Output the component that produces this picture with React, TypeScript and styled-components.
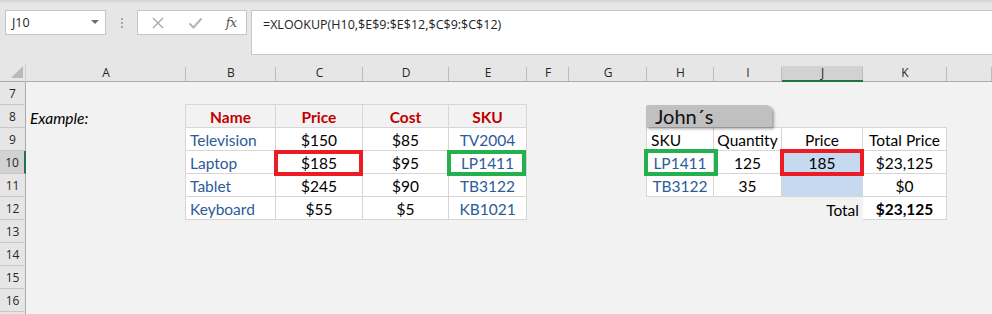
import styled, { createGlobalStyle, css } from "styled-components";

const GlobalStyle = createGlobalStyle`
  html, body {
    margin: 0;
    padding: 0;
    background: #f2f2f2;
    overflow: hidden;
  }
`;

const UI_FONT = `"Open Sans", "Noto Sans", sans-serif`;
const CELL_FONT = `Lato, "Liberation Sans", sans-serif`;
const GRID_LINE = "#d6d6d6";

// column widths in px: row header, A..K, rest
const COLUMNS = ["A", "B", "C", "D", "E", "F", "G", "H", "I", "J", "K"];
const WIDTHS = [26, 160, 90, 87, 86, 78, 42, 78, 67, 68, 81, 84];
const ROWS = [7, 8, 9, 10, 11, 12, 13, 14, 15, 16];

const col = (letter: string) => COLUMNS.indexOf(letter) + 2;
const row = (n: number) => n - 5;

type Align = "left" | "center" | "right";

interface CellSpec {
  ref: string;
  text?: string;
  align?: Align;
  color?: string;
  bold?: boolean;
  italic?: boolean;
  bg?: string;
  border?: boolean;
  top?: boolean;
  left?: boolean;
  box?: { color: string; t: number; r: number; b: number; l: number };
}

const RED = "#c00000";
const BLUE = "#2e5a98";
const RED_BOX = "#ed1c24";
const GREEN_BOX = "#22b14c";

const tbl = { border: true };

const CELLS: CellSpec[] = [
  { ref: "A8", text: "Example:", align: "left", italic: true },

  { ref: "B8", text: "Name", bold: true, color: RED, bg: "#f2f2f2", ...tbl, top: true, left: true },
  { ref: "C8", text: "Price", bold: true, color: RED, bg: "#f2f2f2", ...tbl, top: true },
  { ref: "D8", text: "Cost", bold: true, color: RED, bg: "#f2f2f2", ...tbl, top: true },
  { ref: "E8", text: "SKU", bold: true, color: RED, bg: "#f2f2f2", ...tbl, top: true },

  { ref: "B9", text: "Television", align: "left", color: BLUE, bg: "#fff", ...tbl, left: true },
  { ref: "C9", text: "$150", bg: "#fff", ...tbl },
  { ref: "D9", text: "$85", bg: "#fff", ...tbl },
  { ref: "E9", text: "TV2004", color: BLUE, bg: "#fff", ...tbl },

  { ref: "B10", text: "Laptop", align: "left", color: BLUE, bg: "#fff", ...tbl, left: true },
  { ref: "C10", text: "$185", bg: "#fff", ...tbl, box: { color: RED_BOX, t: -1, r: -1, b: -3, l: -2 } },
  { ref: "D10", text: "$95", bg: "#fff", ...tbl },
  { ref: "E10", text: "LP1411", color: BLUE, bg: "#fff", ...tbl, box: { color: GREEN_BOX, t: -1, r: 0, b: -3, l: -2 } },

  { ref: "B11", text: "Tablet", align: "left", color: BLUE, bg: "#fff", ...tbl, left: true },
  { ref: "C11", text: "$245", bg: "#fff", ...tbl },
  { ref: "D11", text: "$90", bg: "#fff", ...tbl },
  { ref: "E11", text: "TB3122", color: BLUE, bg: "#fff", ...tbl },

  { ref: "B12", text: "Keyboard", align: "left", color: BLUE, bg: "#fff", ...tbl, left: true },
  { ref: "C12", text: "$55", bg: "#fff", ...tbl },
  { ref: "D12", text: "$5", bg: "#fff", ...tbl },
  { ref: "E12", text: "KB1021", color: BLUE, bg: "#fff", ...tbl },

  { ref: "H9", text: "SKU", align: "left", bg: "#fff", ...tbl, top: true, left: true },
  { ref: "I9", text: "Quantity", bg: "#fff", ...tbl, top: true },
  { ref: "J9", text: "Price", bg: "#fff", ...tbl, top: true },
  { ref: "K9", text: "Total Price", bg: "#fff", ...tbl, top: true },

  { ref: "H10", text: "LP1411", color: BLUE, bg: "#fff", ...tbl, left: true, box: { color: GREEN_BOX, t: -2, r: -5, b: -3, l: -3 } },
  { ref: "I10", text: "125", bg: "#fff", ...tbl },
  { ref: "J10", text: "185", bg: "#c5d9f1", ...tbl, box: { color: RED_BOX, t: -2, r: -2, b: -3, l: -2 } },
  { ref: "K10", text: "$23,125", bg: "#fff", ...tbl },

  { ref: "H11", text: "TB3122", color: BLUE, bg: "#fff", ...tbl, left: true },
  { ref: "I11", text: "35", bg: "#fff", ...tbl },
  { ref: "J11", bg: "#c5d9f1", ...tbl },
  { ref: "K11", text: "$0", bg: "#fff", ...tbl },

  { ref: "J12", text: "Total", align: "right" },
  { ref: "K12", text: "$23,125", bold: true, bg: "#fff", ...tbl },
];

const parseRef = (ref: string) => {
  const m = ref.match(/^([A-Z])(\d+)$/)!;
  return { c: col(m[1]), r: row(Number(m[2])) };
};

const XIcon = () => (
  <svg width="14" height="14" viewBox="0 0 14 14">
    <path d="M2 2 L12 12 M12 2 L2 12" stroke="#a8a8a8" strokeWidth="1.4" fill="none" />
  </svg>
);

const CheckIcon = () => (
  <svg width="15" height="14" viewBox="0 0 15 14">
    <path d="M1.5 7.5 L5.5 11.5 L13.5 2.5" stroke="#b4b4b4" strokeWidth="2" fill="none" />
  </svg>
);

const CornerMark = () => (
  <svg width="12" height="12" viewBox="0 0 12 12">
    <polygon points="12,0 12,12 0,12" fill="#b9b9b9" />
  </svg>
);

const App = () => {
  return (
    <>
      <GlobalStyle />
      <Window>
        <FormulaArea>
          <NameBox>
            <span>J10</span>
            <DropArrow />
          </NameBox>
          <Grip>
            <i />
            <i />
            <i />
          </Grip>
          <ButtonBox>
            <XIcon />
            <CheckIcon />
            <Fx>fx</Fx>
          </ButtonBox>
          <FormulaInput>=XLOOKUP(H10,$E$9:$E$12,$C$9:$C$12)</FormulaInput>
        </FormulaArea>

        <Sheet>
          <Corner>
            <CornerMark />
          </Corner>
          {COLUMNS.map((letter) => (
            <ColHeader key={letter} $c={col(letter)} $active={letter === "J"}>
              {letter}
            </ColHeader>
          ))}
          <ColHeader $c={COLUMNS.length + 2} />
          {ROWS.map((n) => (
            <RowHeader key={n} $r={row(n)} $active={n === 10}>
              {n}
            </RowHeader>
          ))}
          <RowHeader $r={row(17)} />

          {CELLS.map((cell) => {
            const { r, c } = parseRef(cell.ref);
            return (
              <Cell
                key={cell.ref}
                $r={r}
                $c={c}
                $align={cell.align ?? "center"}
                $color={cell.color}
                $bold={cell.bold}
                $italic={cell.italic}
                $bg={cell.bg}
                $border={cell.border}
                $top={cell.top}
                $left={cell.left}
              >
                {cell.text}
                {cell.box && (
                  <Highlight
                    $color={cell.box.color}
                    $t={cell.box.t}
                    $r={cell.box.r}
                    $b={cell.box.b}
                    $l={cell.box.l}
                  />
                )}
              </Cell>
            );
          })}

          <Label $r={row(8)} $c={col("H")}>
            John´s
          </Label>
        </Sheet>
      </Window>
    </>
  );
};

export default App;

const Window = styled.div`
  width: 992px;
  height: 314px;
  overflow: hidden;
  display: flex;
  flex-direction: column;
  background: #f2f2f2;
`;

const FormulaArea = styled.div`
  flex: 0 0 64px;
  height: 64px;
  box-sizing: border-box;
  padding: 10px 0 0 5px;
  display: flex;
  align-items: flex-start;
  background: linear-gradient(#d2d2d2 0, #e3e3e3 3px, #e6e6e6 5px);
  font-family: ${UI_FONT};
  font-size: 12.5px;
  color: #222;
`;

const NameBox = styled.div`
  width: 101px;
  height: 25px;
  box-sizing: border-box;
  background: #fff;
  border: 1px solid #c6c6c6;
  display: flex;
  align-items: center;
  justify-content: space-between;
  padding: 0 6px 0 6px;
`;

const DropArrow = styled.span`
  width: 0;
  height: 0;
  border-left: 4px solid transparent;
  border-right: 4px solid transparent;
  border-top: 4px solid #6f6f6f;
  margin-bottom: 2px;
`;

const Grip = styled.div`
  width: 31px;
  height: 25px;
  display: flex;
  flex-direction: column;
  align-items: center;
  justify-content: center;
  gap: 2px;

  i {
    width: 2px;
    height: 2px;
    background: #a6a6a6;
  }
`;

const ButtonBox = styled.div`
  width: 110px;
  height: 25px;
  box-sizing: border-box;
  background: #fff;
  border: 1px solid #c6c6c6;
  display: flex;
  align-items: center;
  padding: 0 10px 0 13px;
  justify-content: space-between;
`;

const Fx = styled.span`
  font-family: "DejaVu Serif", "Liberation Serif", serif;
  font-style: italic;
  font-size: 13px;
  color: #555;
  letter-spacing: -1px;
`;

const FormulaInput = styled.div`
  flex: 1;
  height: 45px;
  margin-left: 4px;
  box-sizing: border-box;
  background: #fff;
  border: 1px solid #c6c6c6;
  border-right: none;
  padding: 5px 0 0 11px;
  line-height: 17px;
`;

const Sheet = styled.div`
  flex: 1 1 auto;
  min-height: 0;
  overflow: hidden;
  display: grid;
  grid-template-columns: ${WIDTHS.map((w) => `${w}px`).join(" ")} 1fr;
  grid-template-rows: 18px repeat(${ROWS.length + 1}, 23px);
  background: #f2f2f2;
`;

const Corner = styled.div`
  grid-row: 1;
  grid-column: 1;
  background: #e6e6e6;
  border-right: 1px solid #d0d0d0;
  border-bottom: 1px solid #ababab;
  display: flex;
  align-items: flex-end;
  justify-content: flex-end;
  padding: 0 2px 3px 0;
`;

const ColHeader = styled.div<{ $c: number; $active?: boolean }>`
  grid-row: 1;
  grid-column: ${(p) => p.$c};
  display: flex;
  align-items: flex-end;
  justify-content: center;
  background: #e6e6e6;
  border-bottom: ${(p) => (p.$active ? "2px solid #217346" : "1px solid #ababab")};
  font-family: ${UI_FONT};
  font-size: 12px;
  color: #262626;
  line-height: 16px;
  position: relative;

  ${(p) =>
    p.$active &&
    css`
      background: linear-gradient(#e6e6e6 0, #e6e6e6 2px, #d2d2d2 2px);
      line-height: 15px;
    `}

  &::after {
    content: "";
    position: absolute;
    right: 0;
    top: 3px;
    bottom: 0;
    width: 1px;
    background: #bcbcbc;
  }
`;

const RowHeader = styled.div<{ $r: number; $active?: boolean }>`
  grid-row: ${(p) => p.$r};
  grid-column: 1;
  display: flex;
  align-items: center;
  justify-content: center;
  background: ${(p) => (p.$active ? "#d2d2d2" : "#e6e6e6")};
  border-bottom: 1px solid #c8c8c8;
  border-right: ${(p) => (p.$active ? "2px solid #217346" : "1px solid #ababab")};
  font-family: ${UI_FONT};
  font-size: 12px;
  color: #262626;
  padding-top: 1px;
`;

const Cell = styled.div<{
  $r: number;
  $c: number;
  $align: Align;
  $color?: string;
  $bold?: boolean;
  $italic?: boolean;
  $bg?: string;
  $border?: boolean;
  $top?: boolean;
  $left?: boolean;
}>`
  grid-row: ${(p) => p.$r};
  grid-column: ${(p) => p.$c};
  position: relative;
  display: flex;
  align-items: flex-end;
  justify-content: ${(p) =>
    p.$align === "left" ? "flex-start" : p.$align === "right" ? "flex-end" : "center"};
  padding: 0 4px 0 4px;
  box-sizing: border-box;
  background: ${(p) => p.$bg ?? "transparent"};
  font-family: ${CELL_FONT};
  font-size: 15.5px;
  line-height: 20px;
  color: ${(p) => p.$color ?? "#000"};
  font-weight: ${(p) => (p.$bold ? 700 : 400)};
  font-style: ${(p) => (p.$italic ? "italic" : "normal")};
  white-space: nowrap;

  ${(p) =>
    p.$border &&
    css`
      border-right: 1px solid ${GRID_LINE};
      border-bottom: 1px solid ${GRID_LINE};
    `}

  box-shadow: ${(p) =>
    [p.$top && `0 -1px 0 ${GRID_LINE}`, p.$left && `-1px 0 0 ${GRID_LINE}`, p.$top && p.$left && `-1px -1px 0 ${GRID_LINE}`]
      .filter(Boolean)
      .join(", ") || "none"};
`;

const Highlight = styled.span<{ $color: string; $t: number; $r: number; $b: number; $l: number }>`
  position: absolute;
  top: ${(p) => p.$t}px;
  right: ${(p) => p.$r}px;
  bottom: ${(p) => p.$b}px;
  left: ${(p) => p.$l}px;
  border: 4px solid ${(p) => p.$color};
  z-index: 2;
  pointer-events: none;
`;

const Label = styled.div<{ $r: number; $c: number }>`
  grid-row: ${(p) => p.$r};
  grid-column: ${(p) => p.$c} / span 3;
  width: 126px;
  height: 22px;
  margin-left: -1px;
  box-sizing: border-box;
  background: #c0c0c0;
  border-radius: 2px 6px 0 0;
  box-shadow: 2px 2px 3px rgba(0, 0, 0, 0.35);
  z-index: 1;
  font-family: ${CELL_FONT};
  font-size: 20px;
  line-height: 22px;
  padding-left: 9px;
  color: #111;
`;
